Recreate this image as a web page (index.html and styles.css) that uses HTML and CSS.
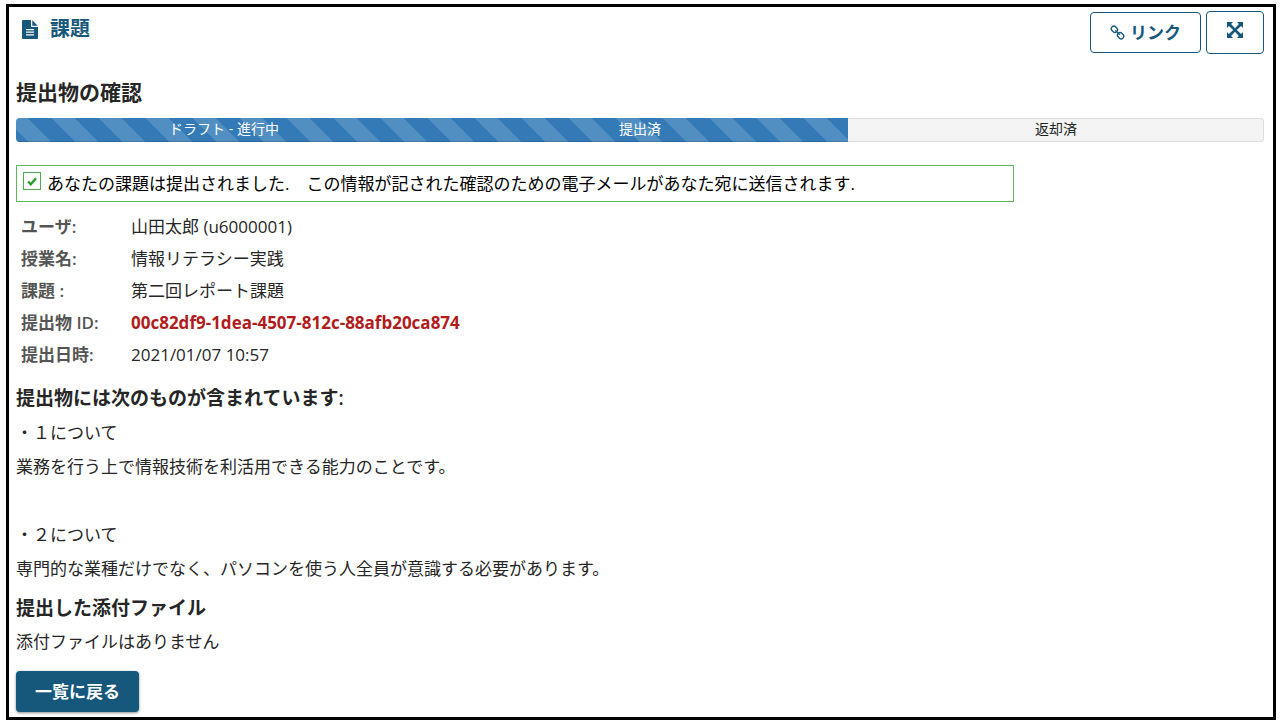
FILE: index.html
```html
<!DOCTYPE html>
<html lang="ja">
<head>
<meta charset="utf-8">
<meta name="viewport" content="width=device-width, initial-scale=1">
<title>課題</title>
<link rel="stylesheet" href="styles.css">
</head>
<body>
<main class="tool">
  <header class="tool-header">
    <h1 class="tool-title">
      <svg class="icon-file" viewBox="0 0 16 19" aria-hidden="true"><path fill="currentColor" fill-rule="evenodd" d="M1 0H9V6Q9 7 10 7H16V18Q16 19 15 19H1Q0 19 0 18V1Q0 0 1 0ZM10.300 0.300 15.700 5.700H10.300ZM4 9V10.200H12V9ZM4 11.600V12.800H12V11.600ZM4 14.200V15.400H12V14.200Z"/></svg>
      課題
    </h1>
    <div class="tool-actions">
      <button class="btn-outline btn-link" type="button">
        <svg class="icon-link" viewBox="0 0 16 16" aria-hidden="true"><g fill="none" stroke="currentColor" stroke-width="1.500" stroke-linecap="round" stroke-linejoin="round"><rect x="1.200" y="1.900" width="7" height="5.400" rx="2.500" transform="rotate(45 4.700 4.600)"/><rect x="7.800" y="8.700" width="7" height="5.400" rx="2.500" transform="rotate(45 11.300 11.400)"/><path d="M6 6 10 10"/></g></svg>
        リンク
      </button>
      <button class="btn-outline btn-expand" type="button" aria-label="全画面表示">
        <svg class="icon-expand" viewBox="0 0 16 16" aria-hidden="true"><path fill="currentColor" d="M0 0H6L4.100 1.900 8 6.200 11.900 1.900 10 0H16V6L14.100 4.100 9.800 8 14.100 11.900 16 10V16H10L11.900 14.100 8 9.800 4.100 14.100 6 16H0V10L1.900 11.900 6.200 8 1.900 4.100 0 6Z"/></svg>
      </button>
    </div>
  </header>

  <h2 class="page-heading">提出物の確認</h2>

  <div class="progress">
    <div class="progress-fill">
      <div class="step">ドラフト - 進行中</div>
      <div class="step">提出済</div>
    </div>
    <div class="step">返却済</div>
  </div>

  <div class="notice">
    <span class="notice-mark"><svg class="icon-check" viewBox="0 0 10 9" aria-hidden="true"><path d="M1 4.500 3.800 7.300 9 1.300" fill="none" stroke="currentColor" stroke-width="2.200"/></svg></span>
    <span>あなたの課題は提出されました.　この情報が記された確認のための電子メールがあなた宛に送信されます.</span>
  </div>

  <table class="summary">
    <tr><th scope="row">ユーザ:</th><td>山田太郎 (u6000001)</td></tr>
    <tr><th scope="row">授業名:</th><td>情報リテラシー実践</td></tr>
    <tr><th scope="row">課題 :</th><td>第二回レポート課題</td></tr>
    <tr><th scope="row">提出物 ID:</th><td class="submission-id">00c82df9-1dea-4507-812c-88afb20ca874</td></tr>
    <tr><th scope="row">提出日時:</th><td>2021/01/07 10:57</td></tr>
  </table>

  <h3 class="section-heading">提出物には次のものが含まれています:</h3>
  <div class="submission">
    <p>・１について</p>
    <p>業務を行う上で情報技術を利活用できる能力のことです。</p>
    <p>&nbsp;</p>
    <p>・２について</p>
    <p>専門的な業種だけでなく、パソコンを使う人全員が意識する必要があります。</p>
  </div>

  <h3 class="section-heading">提出した添付ファイル</h3>
  <p class="attachments">添付ファイルはありません</p>

  <button class="btn-primary" type="button">一覧に戻る</button>
</main>
</body>
</html>
```
FILE: styles.css
```css
* {
  box-sizing: border-box;
}

body {
  margin: 0;
  min-height: 100vh;
  padding: 4px 8px 6px 6px;
  display: flex;
  background: #fff;
  color: #262626;
  font-family: "Open Sans", "Noto Sans CJK JP", sans-serif;
  font-size: 17px;
  line-height: 24px;
}

h1, h2, h3, p {
  margin: 0;
}

button {
  font: inherit;
  cursor: pointer;
}

svg {
  display: block;
  flex: none;
}

.tool {
  flex: 1;
  min-width: 0;
  border: 3px solid #000;
  padding: 4px 9px 0 7px;
}

.tool-header {
  display: flex;
  justify-content: space-between;
  align-items: flex-start;
}

.tool-title {
  display: flex;
  align-items: center;
  gap: 12px;
  padding: 6px 6px 0;
  color: #16587c;
  font-size: 20px;
  font-weight: 600;
}

.icon-file {
  width: 16px;
  height: 19px;
}

.tool-actions {
  display: flex;
  align-items: center;
  gap: 5px;
}

.btn-outline {
  display: flex;
  align-items: center;
  justify-content: center;
  background: #fff;
  border: 1px solid #16587c;
  border-radius: 4px;
  color: #16587c;
  font-weight: 600;
}

.btn-link {
  gap: 5px;
  height: 41px;
  padding: 0 19px;
}

.btn-expand {
  width: 58px;
  height: 43px;
  padding: 0 0 5px;
}

.icon-link {
  width: 15px;
  height: 15px;
}

.icon-expand {
  width: 16px;
  height: 16px;
}

.page-heading {
  margin-top: 24px;
  font-size: 21px;
  font-weight: 600;
  line-height: 28px;
}

.progress {
  display: flex;
  margin-top: 12px;
  height: 24px;
  overflow: hidden;
  background: #f4f4f4;
  border-radius: 4px;
  box-shadow: inset 0 0 0 1px #dcdcdc;
  font-size: 14px;
  line-height: 22px;
  text-align: center;
}

.progress-fill {
  flex: 2;
  display: flex;
  background-color: #337ab7;
  background-image: linear-gradient(45deg, rgba(255, 255, 255, .15) 25%, transparent 25%, transparent 50%, rgba(255, 255, 255, .15) 50%, rgba(255, 255, 255, .15) 75%, transparent 75%, transparent);
  background-position: -12px 0;
  background-size: 47px 47px;
  box-shadow: inset 0 -1px 0 rgba(0, 0, 0, .15);
  color: #fff;
}

.step {
  flex: 1;
}

.notice {
  display: flex;
  align-items: flex-start;
  gap: 6px;
  width: 80%;
  margin-top: 23px;
  padding: 6px 6px 5px;
  border: 1px solid #5cb85c;
  color: #000;
}

.notice-mark {
  display: grid;
  place-items: center;
  flex: none;
  width: 18px;
  height: 18px;
  border: 1px solid #4caf50;
  color: #1f9c1f;
}

.icon-check {
  width: 10px;
  height: 9px;
}

.summary {
  margin-top: 9px;
  border-collapse: collapse;
}

.summary th,
.summary td {
  padding: 4px 5px;
  text-align: left;
}

.summary th {
  width: 110px;
  color: #555;
  font-weight: 600;
}

.summary .submission-id {
  color: #b11c1c;
  font-weight: 700;
}

.section-heading {
  margin-top: 13px;
  font-size: 19px;
  font-weight: 600;
  line-height: 28px;
}

.submission {
  display: grid;
  gap: 10px;
  margin-top: 9px;
}

.attachments {
  margin-top: 8px;
}

.btn-primary {
  height: 41px;
  margin-top: 17px;
  padding: 0 19px;
  border: 0;
  border-radius: 4px;
  background: #16587c;
  box-shadow: 0 1px 3px rgba(0, 0, 0, .45);
  color: #fff;
  font-weight: 600;
}
```
